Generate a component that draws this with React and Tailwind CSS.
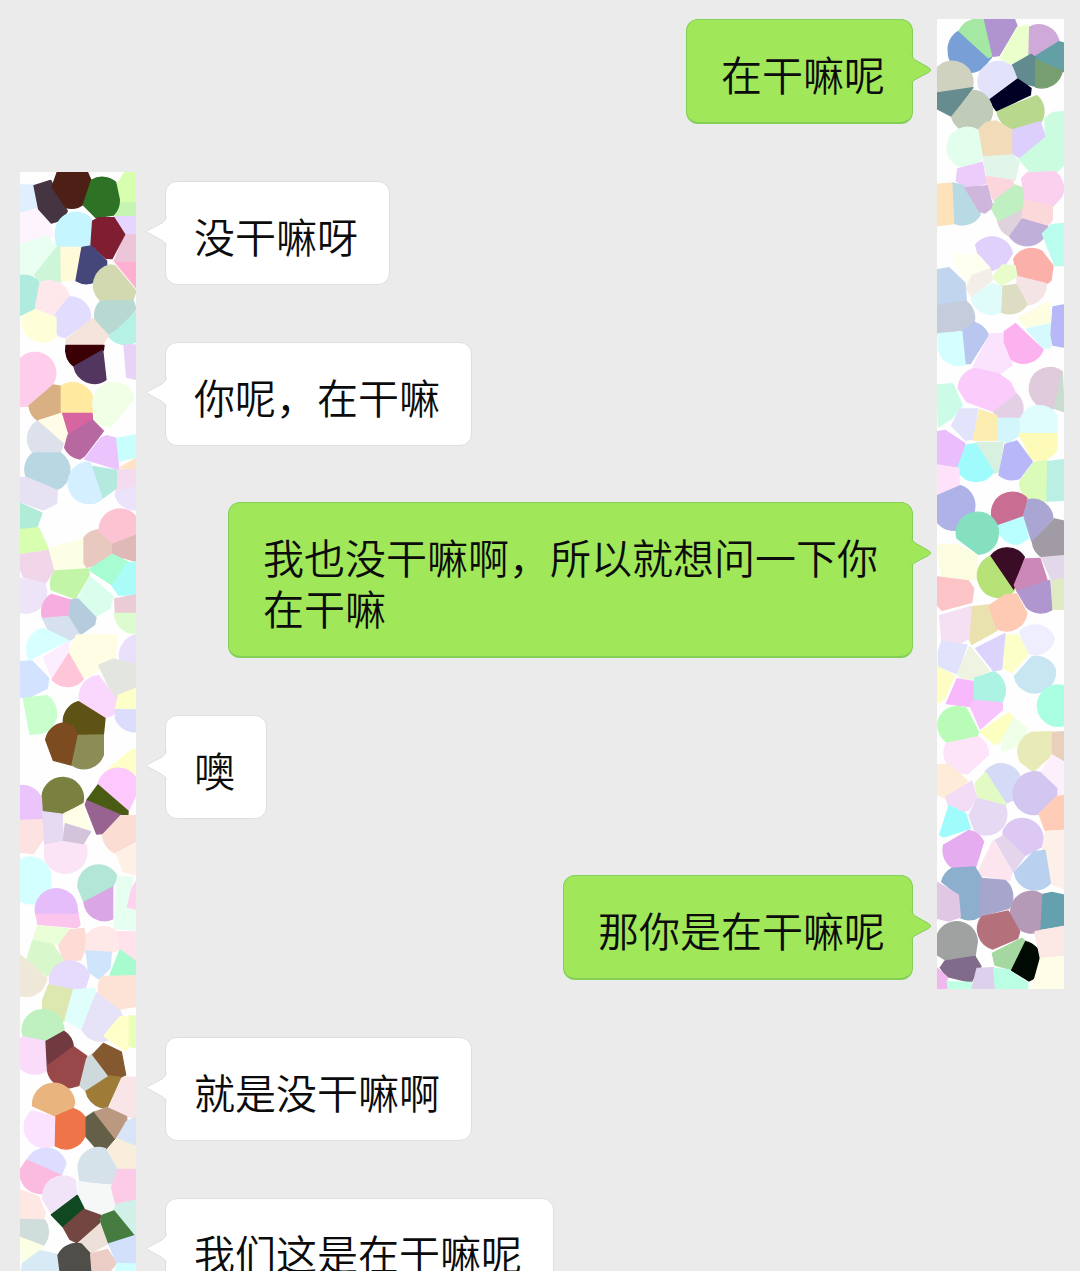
import React from "react";

const messages = [
  { id: 1, mine: true, text: "在干嘛呢" },
  { id: 2, mine: false, text: "没干嘛呀" },
  { id: 3, mine: false, text: "你呢，在干嘛" },
  { id: 4, mine: true, text: "我也没干嘛啊，所以就想问一下你在干嘛" },
  { id: 5, mine: false, text: "噢" },
  { id: 6, mine: true, text: "那你是在干嘛呢" },
  { id: 7, mine: false, text: "就是没干嘛啊" },
  { id: 8, mine: false, text: "我们这是在干嘛呢" },
];

// Each band is a slice of a crystal mosaic: y offset, then [fill, path] cells
const leftBands = [
  {
    y: 0,
    cells: [
      ["#e0effd", "M30 60H70L76 85L84 130L30 145Z"],
      ["#fdf4fe", "M30 145L84 130L120 172L130 215L30 240Z"],
      ["#d7ffad", "M345 21H378V112H329L320 60Z"],
      ["#c5f5b0", "M329 112H378V152H312L328 122Z"],
      ["#453543", "M72 62L122 46L134 70L172 138A62 62 0 0 1 124 174L86 132Z"],
      ["#4e2015", "M142 21H232L244 48L222 116A62 62 0 0 1 168 128L126 66Z"],
      ["#2e7226", "M244 46A62 62 0 0 1 317 52L328 104A62 62 0 0 1 310 150L258 158L220 120Z"],
      ["#c5f5ff", "M136 210A62 62 0 0 1 246 165L242 240L220 247H140Z"],
      ["#e8fff2", "M30 240L110 212L140 245L72 330H30Z"],
      ["#cdf5d8", "M142 246L153 249L154 350A62 62 0 0 1 74 330Z"],
      ["#fffad8", "M153 247H215L198 344L154 348Z"],
      ["#e6d5ff", "M314 155H378V208H344L316 165Z"],
      ["#edc5d8", "M344 210H378V290H312Z"],
      ["#ffb0d0", "M316 292H378V368Z"],
      ["#7e1e30", "M248 168L266 158H312L344 208L306 281L288 280L243 240Z"],
      ["#45477a", "M216 247L244 243L290 288V302L256 350A62 62 0 0 1 198 347Z"],
      ["#d2d9b0", "M300 300L315 302L378 378L368 408L270 406A62 62 0 0 1 300 300Z"],
      ["#b8d9d2", "M272 408H370L378 432L332 488L295 510A62 62 0 0 1 272 408Z"],
      ["#b5f2e5", "M295 512L325 492L378 440V530A62 62 0 0 1 295 512Z"],
      ["#b0ebdf", "M30 332A62 62 0 0 1 88 352L75 432L30 452Z"],
      ["#ffe8ec", "M90 354A62 62 0 0 1 178 392L140 455L76 432Z"],
      ["#e2dcff", "M178 396A62 62 0 0 1 242 452L240 466L165 518L145 512A62 62 0 0 1 142 440Z"],
      ["#feffd8", "M75 434L138 458V515A62 62 0 0 1 36 480L40 452Z"],
      ["#f5e4dc", "M248 460L296 512L276 540H168V524Z"],
      ["#3a0006", "M168 541H282L280 556L192 604A62 62 0 0 1 168 541Z"],
      ["#53365f", "M192 605L278 556L288 644A62 62 0 0 1 192 605Z"],
      ["#e8d2f8", "M342 540H378V643L350 636Z"],
      ["#ffcdec", "M30 582A62 62 0 0 1 126 660L56 723L30 725Z"],
      ["#d8b084", "M57 723L130 660L154 664V742L84 767A62 62 0 0 1 57 723Z"],
      ["#ffeaa0", "M154 663A62 62 0 0 1 250 712L246 747L154 742Z"],
      ["#d765a0", "M156 745H246L248 765L176 808Z"],
      ["#f0ffe5", "M250 730A62 62 0 0 1 372 700L340 740L300 788L255 770Z"],
      ["#fffce8", "M86 767L154 745L172 806L165 835Z"],
      ["#dde1ec", "M82 768L160 836L150 864H70A62 62 0 0 1 82 768Z"],
      ["#b868a0", "M174 810L248 766L280 798L224 872L210 882A62 62 0 0 1 164 848Z"],
    ],
  },
  {
    y: 810,
    cells: [
      ["#ebc4fd", "M272 10L290 2L320 10L326 104L224 72Z"],
      ["#c8fffc", "M320 10L378 0V66L328 78Z"],
      ["#ffe3c4", "M330 98L378 70V104Z"],
      ["#f5dbef", "M325 104H378V160L318 170Z"],
      ["#ebe3fc", "M318 170L378 155V225A62 62 0 0 1 316 180Z"],
      ["#b9d7e2", "M66 56L80 54H152A62 62 0 0 1 140 164L50 128A62 62 0 0 1 66 56Z"],
      ["#e6e2f3", "M30 128H50L142 166L140 205L100 225L30 200Z"],
      ["#b0ecd8", "M30 204L96 234L80 278L30 282Z"],
      ["#d8ffb0", "M30 284L86 278L116 344L30 356Z"],
      ["#f1d6ea", "M36 358L118 346L134 404L106 444L40 426L30 400V360Z"],
      ["#eee4f8", "M30 430L104 446A62 62 0 0 1 30 532Z"],
      ["#d4efff", "M240 82L282 186A62 62 0 1 1 240 82Z"],
      ["#b3e9de", "M248 94L320 106L318 160L280 188Z"],
      ["#fdfee6", "M118 342L222 310L220 400L134 404Z"],
      ["#e8c9c0", "M268 284L308 326L338 370L230 397L222 384V308A62 62 0 0 1 268 284Z"],
      ["#dfb9b6", "M308 326L378 296V380L308 358Z"],
      ["#fcc3d2", "M268 290A62 62 0 0 1 378 245V296L308 324Z"],
      ["#a8fcd2", "M236 404L308 358L360 384L306 450Z"],
      ["#aafcf8", "M350 386L378 380V480H326L306 452Z"],
      ["#c2f5a8", "M136 408L234 402L238 420L196 492L124 465A62 62 0 0 1 136 408Z"],
      ["#d9feec", "M240 426L310 484L298 520L256 545L204 494Z"],
      ["#f6aee0", "M124 478L182 495L176 544L98 550A62 62 0 0 1 124 478Z"],
      ["#b5ccdc", "M184 495L204 492L258 548L254 568L212 598L176 546Z"],
      ["#d6e0ee", "M98 550L174 544L208 598L172 620L122 598Z"],
      ["#ebccd6", "M314 492L378 480V532H316Z"],
      ["#dcfcd0", "M314 535H378V596A62 62 0 0 1 314 540Z"],
      ["#fffee4", "M176 650L200 600H320L316 680L230 725L220 728Z"],
      ["#d8ffff", "M52 655A62 62 0 0 1 100 580L176 616L56 675Z"],
      ["#fdeeff", "M100 668L176 620V655L126 728Z"],
      ["#ffc5d8", "M176 656L220 732A62 62 0 0 1 126 734Z"],
      ["#eae0fc", "M378 600V686L330 674A62 62 0 0 1 378 600Z"],
      ["#e3e6df", "M266 690L310 672L378 688V760L318 800Z"],
      ["#fad8fd", "M266 722L320 795L312 838L286 848L212 806A62 62 0 0 1 266 722Z"],
      ["#d2e2ff", "M30 680L66 678L116 730L112 760L50 790L30 786Z"],
    ],
  },
  {
    y: 1590,
    cells: [
      ["#c8ffcc", "M40 10L110 2A62 62 0 0 1 96 114L60 118Z"],
      ["#fcffc8", "M326 0L378 -20V42H316Z"],
      ["#dcdcfc", "M316 44H378V110A62 62 0 0 1 316 70Z"],
      ["#5e5214", "M205 20L285 70L280 120L205 122L188 92L160 84A62 62 0 0 1 205 20Z"],
      ["#7c4c20", "M160 84L188 92L204 120L184 210L130 196L107 134A62 62 0 0 1 160 84Z"],
      ["#8b8c56", "M205 121L280 120V180A62 62 0 0 1 186 210Z"],
      ["#fdffc6", "M294 224L362 166L378 164V246L300 234Z"],
      ["#7a8040", "M97 318A62 62 0 1 1 219 322L158 355L98 348Z"],
      ["#eac4fb", "M30 272A62 62 0 0 1 94 310L98 372L30 374Z"],
      ["#fde2e2", "M30 376L98 374L102 430L70 476L30 472Z"],
      ["#fae4f6", "M104 446L150 436L228 450A62 62 0 0 1 104 490Z"],
      ["#e6d9f2", "M98 350L158 358V436L104 446Z"],
      ["#ffffe8", "M162 356L218 330L240 404L160 384Z"],
      ["#d3c4dc", "M166 386L242 410L220 446L160 436Z"],
      ["#fdc8fd", "M264 268A62 62 0 0 1 378 250V300L355 348Z"],
      ["#4a5c14", "M264 270L354 348V358L330 362L230 316Z"],
      ["#976390", "M230 317L332 360L276 416L260 417L226 330Z"],
      ["#fbddd4", "M278 420L332 362H378V440L314 474A62 62 0 0 1 278 420Z"],
      ["#fef0e4", "M318 474L378 448V540L340 530Z"],
      ["#d4ffff", "M30 494A62 62 0 0 1 122 550A62 62 0 0 1 30 618Z"],
      ["#b3e6d6", "M204 578A62 62 0 0 1 322 546L306 580L222 622Z"],
      ["#dba6e6", "M222 622L308 576V672A62 62 0 0 1 222 622Z"],
      ["#e6fff0", "M322 546H366L368 590L352 636L378 644V706L312 700Z"],
      ["#ffd2f0", "M366 580L378 560V642L352 636Z"],
      ["#e6bdfb", "M78 660A62 62 0 0 1 200 628L204 660Z"],
      ["#fbc5ee", "M78 658H204L210 690L200 698L84 688Z"],
      ["#eaffd8", "M82 692L176 702L150 750L70 736Z"],
      ["#fddcd6", "M180 704L222 700L230 750L212 795L160 796L146 752Z"],
      ["#d8f8cc", "M68 736L128 748L160 796L112 844L50 795Z"],
      ["#ffe8e8", "M230 720A62 62 0 0 1 320 710L325 765L305 772H226Z"],
      ["#ffe2ec", "M322 710H378V800L330 762Z"],
      ["#cfe5fb", "M228 768L304 772L300 820L266 852L236 830Z"],
      ["#fde3d6", "M276 845L378 838V935L350 938A62 62 0 0 1 276 845Z"],
      ["#a8fbcf", "M330 764L378 800V838L300 840Z"],
      ["#efe8d8", "M30 780L56 800L110 850A62 62 0 0 1 30 902Z"],
      ["#e6dafd", "M118 850A62 62 0 0 1 238 840L226 878L190 885H120Z"],
    ],
  },
  {
    y: 2445,
    cells: [
      ["#dce8b0", "M116 15L190 30L170 120L150 125L98 88V60Z"],
      ["#e0fefb", "M190 30L252 25L260 40L218 130L212 148L165 120Z"],
      ["#e6e2f8", "M260 38L330 92A62 62 0 0 1 216 148Z"],
      ["#bff0c0", "M36 154A62 62 0 0 1 162 150L108 184L40 168Z"],
      ["#ffffc8", "M282 168L330 110H358V200L345 212Z"],
      ["#eaffb8", "M358 108H378V204L358 198Z"],
      ["#fadbfa", "M38 170L106 184L112 270A62 62 0 0 1 38 170Z"],
      ["#703a40", "M108 184L162 154A62 62 0 0 1 190 200L112 258Z"],
      ["#984848", "M112 258L190 200L230 228V240L208 316L182 323A62 62 0 0 1 112 258Z"],
      ["#cdd9da", "M246 222L298 286L226 332L210 318L230 236Z"],
      ["#f9e4e8", "M332 292H378V414L350 410L300 380Z"],
      ["#85592f", "M280 190L334 216L347 285L330 292L298 290L248 224Z"],
      ["#9e7c38", "M228 334L298 288L332 292L292 382H272A62 62 0 0 1 228 334Z"],
      ["#fbe2ff", "M66 392L134 410L136 494A62 62 0 0 1 66 392Z"],
      ["#eab47e", "M68 378A62 62 0 1 1 194 368L188 386L140 410Z"],
      ["#ef7448", "M138 408L190 386A62 62 0 0 1 225 412V468A62 62 0 0 1 136 498Z"],
      ["#646048", "M228 412L252 396L315 476L288 507L256 502L228 470Z"],
      ["#ba9980", "M254 396L290 382L350 410V422L316 476Z"],
      ["#d8e4f8", "M350 424L378 412V500L320 476Z"],
      ["#f9eedb", "M292 508L320 476L378 500V568L324 566Z"],
      ["#ddddff", "M52 540A62 62 0 0 1 168 550L154 586Z"],
      ["#fbbbe0", "M50 540L154 586A62 62 0 0 1 30 570Z"],
      ["#d5e2ea", "M204 560A62 62 0 0 1 286 506L322 570L312 612L210 605Z"],
      ["#fbcbe8", "M324 568H378V660L318 672L302 630Z"],
      ["#f2e4f8", "M100 632A62 62 0 0 1 196 600L200 645L124 700L98 656Z"],
      ["#f5f8f7", "M204 604L300 618L314 680L272 704L222 690L205 645Z"],
      ["#fee8e4", "M30 630L86 650L106 700L100 716H30Z"],
      ["#d0dedb", "M30 718L104 720A62 62 0 0 1 100 796L30 770Z"],
      ["#104822", "M202 646L222 686L160 742L124 704Z"],
      ["#d0f0e8", "M318 674L378 660V766L312 693Z"],
      ["#ede0d8", "M200 786L270 724L294 790L242 820Z"],
      ["#744641", "M222 688L272 706L268 728L200 788L180 778L160 742Z"],
      ["#477c40", "M276 706L312 693L372 766L296 790L272 724Z"],
      ["#fbffe4", "M30 772L100 798L90 820L36 848Z"],
      ["#d8eaf6", "M38 850L90 812L146 824L150 873H34Z"],
      ["#504e48", "M144 826A62 62 0 0 1 214 792L240 820L246 873H150Z"],
      ["#eccdc6", "M242 822L292 808L320 850L300 873H246Z"],
      ["#d2e0fb", "M296 792L372 768L378 766V850L320 848Z"],
      ["#cfffff", "M320 852H378V873H316Z"],
    ],
  },
];

const rightBands = [
  {
    y: 0,
    cells: [
      ["#789fd6", "M102 78L200 156L180 180A62 62 0 0 1 70 140A62 62 0 0 1 102 78Z"],
      ["#a4e8a4", "M102 78A62 62 0 0 1 178 46L202 152L190 158Z"],
      ["#b094cf", "M178 42H268L276 62L222 152L204 154Z"],
      ["#eaffcc", "M226 160L276 68A62 62 0 0 1 312 64V148L264 178Z"],
      ["#cfaad9", "M314 66A62 62 0 0 1 402 108L328 156L312 148Z"],
      ["#62a0a5", "M328 156L402 110L415 114V200L332 166Z"],
      ["#628b90", "M262 180L318 148L332 158V244L290 234L274 215Z"],
      ["#779e70", "M332 164L412 198A62 62 0 0 1 332 246Z"],
      ["#e2e2fb", "M160 216A62 62 0 0 1 262 186L276 222L196 284A62 62 0 0 1 160 216Z"],
      ["#b8d88e", "M216 318L336 272A62 62 0 0 1 262 371A62 62 0 0 1 216 318Z"],
      ["#000024", "M278 222L318 250L316 270L214 317L192 286Z"],
      ["#d0d2c0", "M37 188A62 62 0 0 1 142 246L37 262Z"],
      ["#668c90", "M37 264L144 248L80 334L37 312Z"],
      ["#c0cbb8", "M144 256A62 62 0 0 1 198 340A62 62 0 0 1 80 336Z"],
      ["#e2ffee", "M66 430A62 62 0 0 1 160 376L172 440L168 470L110 486A62 62 0 0 1 66 430Z"],
      ["#f1dbb8", "M162 372L184 352L214 348L262 376V450L176 454Z"],
      ["#ccfce0", "M360 340L385 322L415 320V480L396 500L320 506L282 462L360 394Z"],
      ["#dccffc", "M264 374L346 350L360 394L282 458L264 446Z"],
      ["#e2f5ea", "M174 456L262 450L282 470L270 526L186 512Z"],
      ["#ecccfb", "M98 492L172 472L184 535L120 548L94 528Z"],
      ["#fbd6dc", "M186 514L262 526L268 545L206 586L184 540Z"],
      ["#fde2ba", "M37 538L82 534L90 656L37 662Z"],
      ["#b8dae4", "M84 534L116 542L166 628A62 62 0 0 1 90 656Z"],
      ["#cfb6dd", "M120 548L186 542L204 606L180 624L164 620Z"],
      ["#e0d2dc", "M218 648L292 612L290 644L254 694A62 62 0 0 1 218 648Z"],
      ["#c0efc2", "M270 540L300 550L294 610L220 648L200 612L212 584Z"],
      ["#fbd0ee", "M306 504L390 500A62 62 0 0 1 410 575L384 604L300 584L290 520Z"],
      ["#fbd8da", "M298 584L382 604V644L368 662L290 640Z"],
      ["#c0afd8", "M292 642L368 664A62 62 0 0 1 254 694Z"],
      ["#bafced", "M352 686L378 660L415 655V782H390Z"],
      ["#dfd0fc", "M152 720A62 62 0 0 1 262 745L240 780L200 797L168 780Z"],
    ],
  },
  {
    y: 750,
    cells: [
      ["#fffff0", "M80 0H160L196 40L124 90Z"],
      ["#fbb0aa", "M266 12A62 62 0 0 1 350 -12L384 32L378 76L366 86L276 62Z"],
      ["#e8fccc", "M202 66L232 30L270 32L276 64L230 92Z"],
      ["#f5e4e5", "M276 64L364 86A62 62 0 0 1 304 150L276 90Z"],
      ["#ddddc4", "M232 94L274 88L306 148A62 62 0 0 1 230 172Z"],
      ["#e0fcfa", "M138 126L200 86L230 94L226 172A62 62 0 0 1 138 126Z"],
      ["#f3efe8", "M140 62L196 40L202 76L138 124L124 100Z"],
      ["#c2d5ef", "M37 44L72 38L120 84L124 138L37 152Z"],
      ["#c5cddc", "M37 152L122 138A62 62 0 0 1 148 200L112 226L37 236Z"],
      ["#d5feff", "M40 236L112 230L122 328A62 62 0 0 1 40 280Z"],
      ["#b9c6ef", "M114 226L148 202A62 62 0 0 1 190 240L136 326H124Z"],
      ["#fbe2fd", "M144 336L196 236H236L262 330L222 358Z"],
      ["#fdfde2", "M280 190L370 140L378 200L300 216Z"],
      ["#d5f9fd", "M304 222L378 206V276L354 280Z"],
      ["#fcb2ee", "M238 230L272 206L354 284A62 62 0 0 1 258 312L238 262Z"],
      ["#b8b8f8", "M384 156L415 150V276L384 270L378 240Z"],
      ["#e3d0e4", "M204 470L272 414A62 62 0 0 1 288 488H220Z"],
      ["#fbcbfc", "M100 400A62 62 0 0 1 150 340L220 356L256 382L272 416L202 468L125 440Z"],
      ["#dfcbdc", "M390 460A62 62 0 1 1 412 350Z"],
      ["#c9dccf", "M388 460L412 350L417 470Z"],
      ["#ccfce8", "M37 390L84 386L112 452L80 490L40 516Z"],
      ["#e2e4fc", "M80 512L104 462H158L144 552L122 556Z"],
      ["#fcedb0", "M164 464L216 482V556H144Z"],
      ["#d2f6fc", "M218 490H284V540L250 562L218 556Z"],
      ["#dffdfd", "M286 490A62 62 0 0 1 395 480V534L286 532Z"],
      ["#fefab8", "M282 536H395V585A62 62 0 0 1 320 612Z"],
      ["#eabdfc", "M37 530L60 526L120 566L102 636L37 628Z"],
      ["#d8f0e0", "M154 562H234L222 650L208 655Z"],
      ["#a0fcfc", "M100 632L124 570L152 566L206 650A62 62 0 0 1 100 650Z"],
      ["#b8b8f8", "M240 568L276 558L322 620L284 670A62 62 0 0 1 222 660Z"],
      ["#dbfcb8", "M284 680L326 622L366 616V738A62 62 0 0 1 284 690Z"],
      ["#baf0e4", "M368 620L415 614V736L366 738Z"],
      ["#fde2f9", "M37 630L102 640V690L37 722Z"],
    ],
  },
  {
    y: 1440,
    cells: [
      ["#fcfde0", "M37 180H100L156 210V280L130 286L50 274Z"],
      ["#aeb2e6", "M37 32L106 2A62 62 0 0 1 148 75A62 62 0 0 1 37 112Z"],
      ["#baffff", "M216 120L298 90L310 160L280 178A62 62 0 0 1 216 120Z"],
      ["#c96e92", "M202 100A62 62 0 0 1 306 40L298 90L218 118Z"],
      ["#a9a6d4", "M310 44A62 62 0 0 1 384 100L320 168L296 90Z"],
      ["#85e0bf", "M150 82A62 62 0 0 1 218 160A62 62 0 0 1 160 208L96 160A62 62 0 0 1 150 82Z"],
      ["#a09ba5", "M388 102L415 108V212L352 217A62 62 0 0 1 322 170Z"],
      ["#e3d8ea", "M350 218L415 212V286H380Z"],
      ["#e0ebc4", "M380 288L415 280V374L380 372Z"],
      ["#b7e277", "M196 214L268 316A62 62 0 0 1 164 300A62 62 0 0 1 196 214Z"],
      ["#3a0c26", "M198 212A62 62 0 0 1 298 216L266 312Z"],
      ["#cc88b6", "M300 222L345 220L366 285L276 318L268 300Z"],
      ["#b096ce", "M276 318L374 286L380 375A62 62 0 0 1 304 366Z"],
      ["#fcc4c6", "M37 276L130 288L146 310L140 352L50 376L37 360Z"],
      ["#eae2ae", "M138 366L192 360L216 436L140 478L132 460Z"],
      ["#ffcab4", "M192 362L240 330L274 326L306 384A62 62 0 0 1 214 430Z"],
      ["#f4e0f2", "M44 392L138 364L132 460L100 478L50 466Z"],
      ["#eeeefe", "M284 440A62 62 0 0 1 388 460A62 62 0 0 1 330 510L306 505Z"],
      ["#fdffc8", "M242 450H280L310 508L262 562L236 552Z"],
      ["#dcd4fc", "M152 490L240 446L230 552L206 558Z"],
      ["#e1e3fc", "M40 500L50 468L126 480L96 566L40 545Z"],
      ["#eff4e2", "M98 566L134 484L194 558L140 582H110Z"],
      ["#fdfdc4", "M37 545L88 572L60 640L37 655Z"],
      ["#c8e6f2", "M268 574L320 516A62 62 0 0 1 390 550A62 62 0 0 1 268 574Z"],
      ["#f8b8fc", "M96 582L148 590V640L134 665L64 656Z"],
      ["#acf3e4", "M148 580L206 560A62 62 0 0 1 236 640L232 650L148 645Z"],
      ["#f8c4fc", "M134 660L150 646L232 654V674L166 732Z"],
      ["#aaffe2", "M415 602V722A62 62 0 1 1 415 602Z"],
      ["#b8fcb8", "M42 700A62 62 0 0 1 124 670L160 740L156 758L70 774A62 62 0 0 1 42 700Z"],
      ["#fdffc0", "M166 740L250 684L268 700L230 765L210 780Z"],
      ["#f0ffe8", "M268 698L306 730L290 780L230 800V765Z"],
    ],
  },
  {
    y: 2190,
    cells: [
      ["#e8ebb8", "M320 -8L380 -10V60L325 110L286 80A62 62 0 0 1 320 -8Z"],
      ["#e8d0bc", "M382 -8L415 -10V78L382 56Z"],
      ["#fde4f8", "M64 25L160 5A62 62 0 0 1 190 60L130 115A62 62 0 0 1 64 25Z"],
      ["#ffecd8", "M37 90L70 88L128 138L62 190L37 180Z"],
      ["#d5dbf7", "M180 110A62 62 0 0 1 288 130L276 190L245 204Z"],
      ["#e2fbc4", "M150 146L182 112L244 210L160 190Z"],
      ["#f2dcf6", "M62 186L140 138L156 190L130 225L100 235L70 210Z"],
      ["#e6d9f4", "M158 190L240 212A62 62 0 0 1 150 290L132 240Z"],
      ["#fdeffb", "M344 118L380 60L415 80V180H396Z"],
      ["#d3c6f0", "M276 140A62 62 0 0 1 344 112L395 160V182L340 237A62 62 0 0 1 276 140Z"],
      ["#ffccb8", "M342 236L396 184L415 182V282L360 286Z"],
      ["#a0fcfc", "M44 300L72 212L122 236L136 280L56 306Z"],
      ["#dcc8f3", "M234 290A62 62 0 0 1 350 335L296 364L236 310Z"],
      ["#e6acf0", "M56 330L132 286A62 62 0 0 1 176 320L152 396A62 62 0 0 1 56 330Z"],
      ["#fde5f0", "M204 318L262 410L254 436L155 420Z"],
      ["#e4d4ec", "M210 316L236 302L298 364L266 410Z"],
      ["#fdf0e8", "M362 290L415 286V460L378 446L352 340Z"],
      ["#b9d1ee", "M268 412L326 350L360 346L376 444A62 62 0 0 1 268 412Z"],
      ["#8cafcd", "M50 440A62 62 0 0 1 80 400L150 396L170 430L166 544A62 62 0 0 1 106 548L100 480Z"],
      ["#a6a6cd", "M168 430L240 436A62 62 0 0 1 252 520L166 544Z"],
      ["#e0c8e4", "M37 442L100 480L106 546L70 558L37 550Z"],
      ["#b59ab8", "M258 520A62 62 0 0 1 354 480L346 588A62 62 0 0 1 258 520Z"],
      ["#64a0ae", "M354 478L380 472L415 480V572L348 582Z"],
      ["#b4717c", "M170 545L250 528L284 590L278 610L204 642A62 62 0 0 1 170 545Z"],
      ["#a0a2a2", "M37 600A62 62 0 0 1 157 620L150 664L60 674L37 660Z"],
      ["#806b8a", "M60 678L150 664L168 694L138 742L64 724L46 698Z"],
      ["#a4d8a0", "M202 655L290 610L306 622L260 704L210 690Z"],
      ["#000a02", "M302 620A62 62 0 0 1 312 738L260 706Z"],
      ["#fce8e4", "M330 590L415 574V662L346 670Z"],
      ["#fdfde8", "M346 670L415 664V765H320Z"],
      ["#f0b8ee", "M37 700L66 726V765H37Z"],
      ["#bfffe4", "M66 740L140 742V765H72Z"],
      ["#ddd0ec", "M156 700L206 698L212 765H140Z"],
      ["#baffe4", "M206 700L250 704L308 745V765H212Z"],
    ],
  },
];

const Mosaic = ({ bands, viewBox }) => (
  <svg viewBox={viewBox} className="block w-full bg-[#fefefe]" aria-hidden="true">
    {bands.map((band) => (
      <g key={band.y} transform={`translate(0 ${band.y})`}>
        {band.cells.map(([fill, d]) => (
          <path
            key={d}
            fill={fill}
            stroke={fill}
            strokeWidth="4"
            strokeLinejoin="round"
            d={d}
          />
        ))}
      </g>
    ))}
  </svg>
);

const Tail = ({ mine }) =>
  mine ? (
    <svg
      viewBox="0 0 22 32"
      className="absolute -right-5 top-[33px] h-8 w-[22px]"
      aria-hidden="true"
    >
      <path
        d="M1 1Q2 5 6 7.500L18.500 14.500Q22.500 17 18.500 19.500L6 26Q2 28 1 31"
        fill="#a0e75a"
        stroke="#84cf55"
      />
      <path d="M0 1H1.500V32H0Z" fill="#a0e75a" />
    </svg>
  ) : (
    <svg
      viewBox="0 0 22 32"
      className="absolute -left-5 top-[33px] h-8 w-[22px]"
      aria-hidden="true"
    >
      <path
        d="M21 1Q20 5 16 8L1.500 15.500Q0 16.500 1.500 17.500L16 25.500Q20 28 21 31"
        fill="#fff"
        stroke="#dedede"
      />
      <path d="M20.500 1H22V32H20.500Z" fill="#fff" />
    </svg>
  );

const Message = ({ mine, text }) => (
  <li className={mine ? "flex justify-end" : "flex justify-start pt-px"}>
    <div
      className={
        mine
          ? "relative max-w-[685px] rounded-xl border border-b-2 border-[#84cf55] bg-[#a0e75a] pb-[23px] pl-[34px] pr-[27px] pt-7"
          : "relative max-w-[685px] rounded-xl border border-[#dedede] bg-white pb-[23px] pl-7 pr-[31px] pt-7"
      }
    >
      <Tail mine={mine} />
      <p className="text-[41px] font-[350] leading-[51px] text-[#0c0c0c]">{text}</p>
    </div>
  </li>
);

const App = () => {
  return (
    <main
      lang="zh-CN"
      className="flex h-screen items-start overflow-hidden bg-[#ebebeb] pl-5 pr-4 font-['Noto_Sans_CJK_SC',sans-serif]"
    >
      {/* Their avatars */}
      <div className="w-[116px] shrink-0 pt-[172px]">
        <Mosaic bands={leftBands} viewBox="30 21 348 3297" />
      </div>

      <ol className="mx-6 flex min-w-0 flex-1 flex-col gap-14 pl-[5px] pt-[19px]">
        {messages.map((message) => (
          <Message key={message.id} mine={message.mine} text={message.text} />
        ))}
      </ol>

      {/* My avatars */}
      <div className="w-[127px] shrink-0 pt-[19px]">
        <Mosaic bands={rightBands} viewBox="36 42 381 2910" />
      </div>
    </main>
  );
};

export default App;
